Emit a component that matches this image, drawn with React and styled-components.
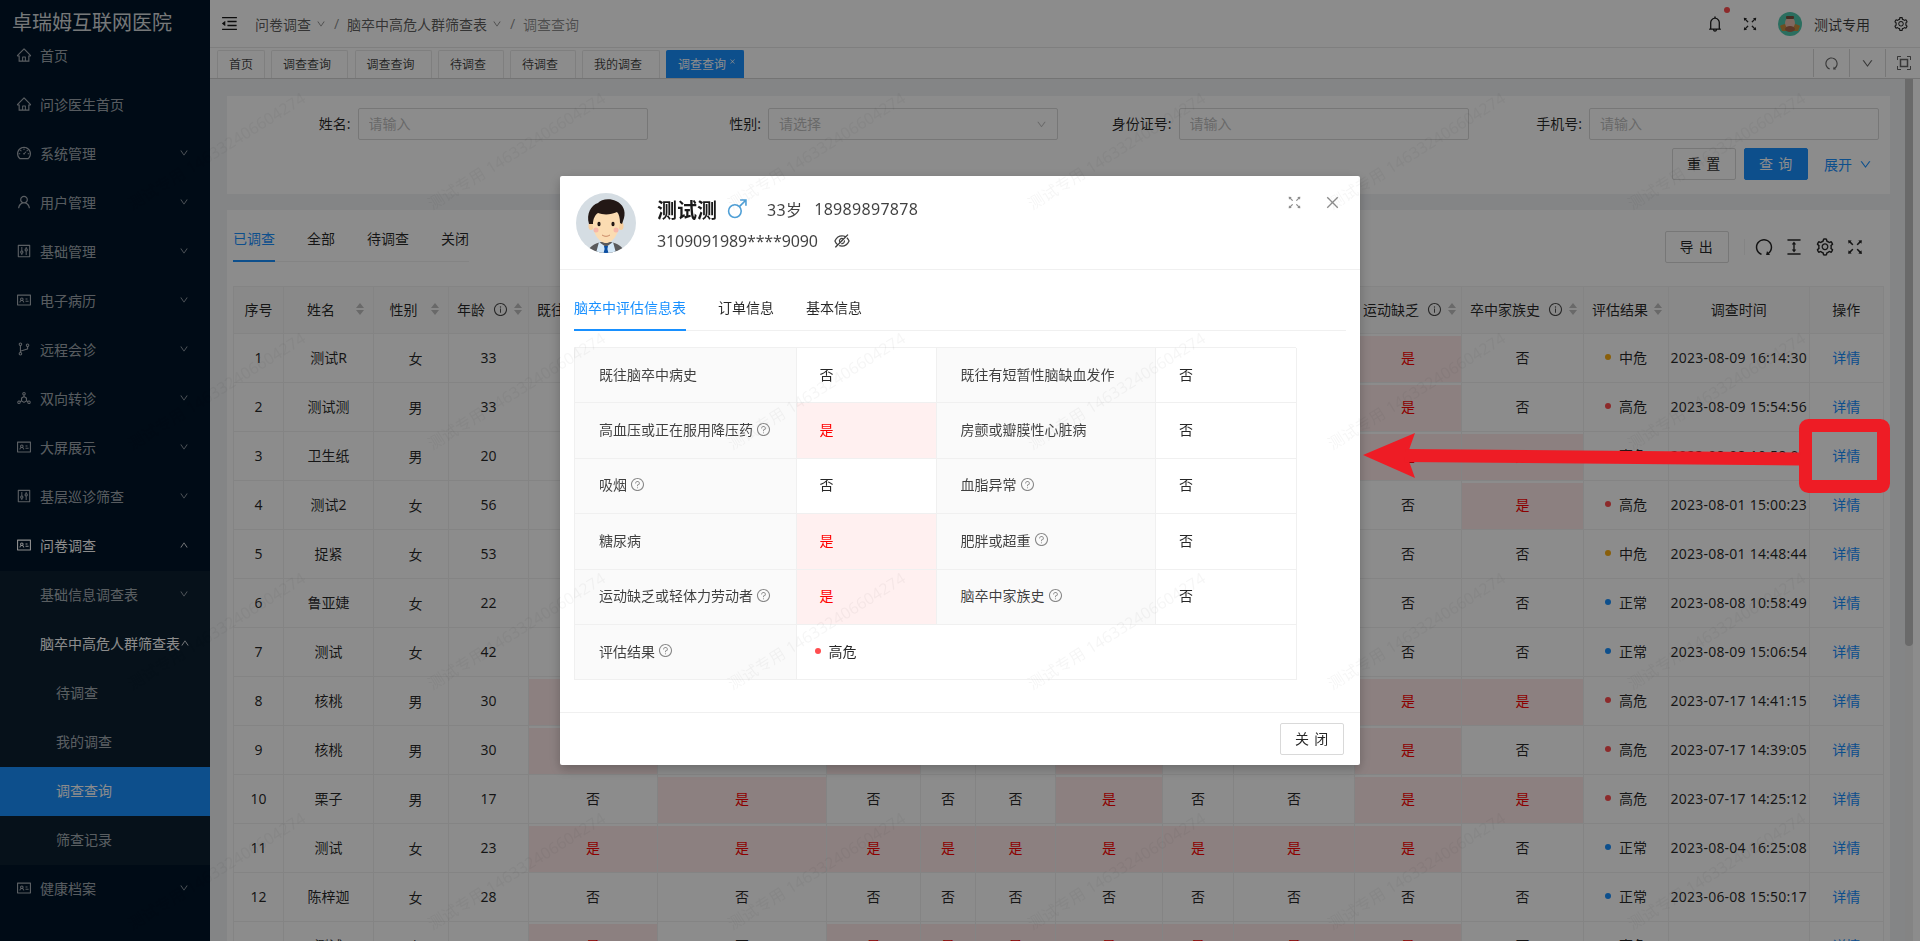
import React from 'react';
import styled, { createGlobalStyle } from 'styled-components';
import {
  AiOutlineHome, AiOutlineDashboard, AiOutlineUser, AiOutlineControl, AiOutlineIdcard,
  AiOutlineBranches, AiOutlineDeploymentUnit, AiOutlineDown, AiOutlineUp, AiOutlineMenuFold,
  AiOutlineBell, AiOutlineFullscreen, AiOutlineSetting, AiOutlineReload, AiOutlineColumnHeight,
  AiOutlineInfoCircle, AiOutlineQuestionCircle, AiOutlineEyeInvisible, AiOutlineClose,
} from 'react-icons/ai';

const FONT = `"Noto Sans", "Noto Sans CJK SC", "Liberation Sans", sans-serif`;

const Global = createGlobalStyle`
  html, body { margin: 0; padding: 0; height: 100%; overflow: hidden; background: #f0f2f5; }
  body { font-family: ${FONT}; font-size: 14px; color: rgba(0,0,0,.85); }
  * { box-sizing: border-box; }
  input::placeholder { color: #bfbfbf; }
`;

const Page = styled.div`display: flex; width: 1920px; height: 941px; overflow: hidden;`;

/* ---------- sidebar ---------- */
const Sider = styled.aside`width: 210px; flex: none; background: #001529; color: rgba(255,255,255,.65);`;
const Brand = styled.div`height: 32px; padding-left: 12px; font-size: 20px; line-height: 45px; white-space: nowrap; color: rgba(255,255,255,.85);`;
const MenuRow = styled.div`
  height: 49px; display: flex; align-items: center; padding: 0 21px 3px ${p => p.$indent}px;
  white-space: nowrap;
  color: ${p => (p.$bright ? '#fff' : 'rgba(255,255,255,.65)')};
  background: ${p => (p.$selected ? '#1890ff' : 'transparent')};
  svg.lead { font-size: 16px; margin-right: 8px; margin-left: -1px; flex: none; }
  svg.caret { font-size: 10px; margin-left: auto; flex: none; }
`;
const SubMenu = styled.div`background: #0b1f31;`;

/* ---------- main ---------- */
const Main = styled.main`flex: 1; min-width: 0; display: flex; flex-direction: column;`;
const TopBar = styled.header`height: 48px; flex: none; background: #fff; border-bottom: 1px solid #e8e8e8; display: flex; align-items: center; padding: 0 11px 0 10px;`;
const Crumbs = styled.nav`display: flex; align-items: center; color: rgba(0,0,0,.65); white-space: nowrap;
  svg.fold { font-size: 19px; margin-right: 16px; color: rgba(0,0,0,.9); }
  svg.caret { font-size: 10px; margin-left: 5px; color: rgba(0,0,0,.5); }
`;
const Slash = styled.span`width: 7px; margin: 0 7px; text-align: center; color: rgba(0,0,0,.45);`;
const CrumbNow = styled.span`color: rgba(0,0,0,.45);`;
const TopRight = styled.div`margin-left: auto; display: flex; align-items: center;`;
const Bell = styled.span`position: relative; display: flex; font-size: 18px; margin-right: 17px; color: rgba(0,0,0,.9);`;
const BellDot = styled.i`position: absolute; top: -8px; right: -6px; width: 6px; height: 6px; border-radius: 50%; background: #ff4d4f;`;
const TopIcon = styled.span`display: flex; font-size: ${p => p.$size || 16}px; margin-right: ${p => p.$mr || 0}px; color: rgba(0,0,0,.85);`;
const UserName = styled.span`margin: 0 23px 0 12px; color: rgba(0,0,0,.75); white-space: nowrap;`;

const TabBar = styled.div`height: 31px; flex: none; background: #fff; border-bottom: 1px solid #d4d4d4; display: flex; padding-left: 7px;`;
const PageTabs = styled.div`display: flex; gap: 6.5px; padding-top: 2px;`;
const PageTab = styled.div`
  width: ${p => p.$w}px; height: 27.5px; display: flex; align-items: center; padding-left: 11px;
  font-size: 12px; white-space: nowrap; border: 1px solid ${p => (p.$active ? '#1890ff' : '#e8e8e8')}; border-bottom-width: 0;
  background: ${p => (p.$active ? '#1890ff' : '#fff')}; color: ${p => (p.$active ? '#fff' : 'rgba(0,0,0,.75)')};
  border-radius: 2px 2px 0 0;
`;
const TabX = styled(AiOutlineClose)`font-size: 7px; margin-left: 3px; margin-top: -5px;`;
const TabTools = styled.div`margin-left: auto; display: flex; padding-top: 1px; height: 29px; margin-right: -1px;`;
const TabTool = styled.div`width: 36px; display: flex; align-items: center; justify-content: center; border-left: 1px solid #d9d9d9; font-size: ${p => p.$size || 15}px; color: rgba(0,0,0,.6);`;
const Refresh = styled(AiOutlineReload)`transform: rotate(90deg);`;
const FrameGlyph = styled.svg`width: 14px; height: 14px;`;

const Body = styled.div`flex: 1; min-height: 0; display: flex; overflow: hidden;`;
const Content = styled.div`flex: 1; min-width: 0; padding: 17px 15px 0 17px;`;
const Rail = styled.div`width: 15px; flex: none; padding-right: 7px; background: linear-gradient(to right, #f1f1f1 8px, #fff 8px);`;
const RailThumb = styled.div`width: 8px; height: 567px; background: #c1c1c1; border-radius: 0 0 4px 4px;`;

const Card = styled.section`background: #fff;`;
const SearchCard = styled(Card)`height: 98px; padding: 12px 11px 0 10px;`;
const FormGrid = styled.div`display: grid; grid-template-columns: repeat(4, 1fr);`;
const Field = styled.div`display: flex; align-items: center;`;
const FieldLabel = styled.label`width: 120.5px; flex: none; padding: 0 7px 2px 0; text-align: right; color: rgba(0,0,0,.85); white-space: nowrap;`;
const TextInput = styled.input`width: 290px; height: 32px; border: 1px solid #d9d9d9; border-radius: 2px; padding: 0 10px 2px; font: 14px ${FONT}; background: #fff; outline: none;`;
const SelectBox = styled.div`position: relative; display: flex; width: 290px;
  svg { position: absolute; right: 11px; top: 11px; font-size: 11px; color: #bfbfbf; }
`;
const Actions = styled.div`display: flex; align-items: center; justify-content: flex-end; margin: 8px 7px 0 0; gap: 8px;`;
const Btn = styled.button`
  width: 64px; height: 32px; padding: 0 0 2px; font: 14px ${FONT}; letter-spacing: .8px; border-radius: 2px; cursor: pointer; flex: none;
  border: 1px solid ${p => (p.$primary ? '#1890ff' : '#d9d9d9')};
  background: ${p => (p.$primary ? '#1890ff' : '#fff')}; color: ${p => (p.$primary ? '#fff' : 'rgba(0,0,0,.85)')};
`;
const More = styled.span`display: flex; align-items: center; color: #1890ff; margin-left: 8px; gap: 7px; svg { font-size: 13px; }`;

const TableCard = styled(Card)`margin-top: 16px; padding: 0 7px 0 6px; height: 800px;`;
const TableHead = styled.div`height: 52px; display: flex; justify-content: space-between; align-items: flex-end;`;
const LineTabs = styled.div`display: flex; gap: 32px; border-bottom: 1px solid #f0f0f0; margin: ${p => p.$margin || 0};`;
const LineTab = styled.div`height: 44px; line-height: 44px; white-space: nowrap; position: relative; color: ${p => (p.$active ? '#1890ff' : 'rgba(0,0,0,.85)')};
  &::after { content: ''; display: ${p => (p.$active ? 'block' : 'none')}; position: absolute; left: 0; right: 0; bottom: -1px; height: 2px; background: #1890ff; }
`;
const Toolbar = styled.div`display: flex; align-items: center; margin: 0 18px -1px 0; font-size: 20px; gap: 10.5px; color: rgba(0,0,0,.85); svg { display: block; }`;
const ToolSep = styled.i`width: 1px; height: 16px; background: #f0f0f0; margin: 0 -1.5px 0 4.5px;`;

const Grid = styled.table`width: 1650px; margin-top: 24px; border-collapse: collapse; table-layout: fixed; border: 1px solid #f0f0f0;`;
const Th = styled.th`height: 47px; padding: 0 8px 2px; background: #fafafa; border: 1px solid #f0f0f0; font-weight: 400; white-space: nowrap; overflow: hidden;`;
const ThInner = styled.div`display: flex; align-items: center; justify-content: ${p => (p.$center ? 'center' : 'flex-start')};`;
const ThTitle = styled.span`flex: ${p => (p.$grow ? 1 : 'none')}; text-align: ${p => (p.$grow ? 'center' : 'left')};`;
const InfoMark = styled(AiOutlineInfoCircle)`margin-left: 8px; font-size: 15px; flex: none; color: rgba(0,0,0,.7);`;
const Sorter = styled.svg`width: 10px; height: 14px; margin-left: 5px; flex: none;`;
const Td = styled.td`
  height: 49px; padding: 0 0 2px; text-align: center; border: 1px solid #f0f0f0; white-space: nowrap; overflow: hidden;
  ${p => p.$hit && 'background: #ffeaea; box-shadow: inset 0 2px 0 #fff; color: #f00;'}
`;
const SexText = styled.span`display: inline-block; transform: translate(4.5px, 1px);`;
const TimeText = styled.span`letter-spacing: .22px;`;
const ResultCell = styled.div`display: flex; align-items: center; padding-left: 21px; gap: 8px;`;
const Dot = styled.i`width: 6px; height: 6px; border-radius: 50%; background: ${p => p.$c}; flex: none;`;
const Link = styled.a`color: #1890ff;`;

/* ---------- overlay layers ---------- */
const Mask = styled.div`position: fixed; inset: 0; background: rgba(0,0,0,.45);`;
const ModalWrap = styled.div`position: fixed; inset: 0; display: flex; align-items: center; justify-content: center;`;
const Modal = styled.div`width: 800px; height: 589px; background: #fff; border-radius: 2px; box-shadow: 0 4px 12px rgba(0,0,0,.25); display: flex; flex-direction: column;`;
const ModalTop = styled.div`height: 94px; flex: none; border-bottom: 1px solid #f0f0f0; display: flex; padding: 17px 19px 0 16px;`;
const Face = styled.svg`width: 60px; height: 60px; flex: none;`;
const Who = styled.div`margin-left: 21px; display: flex; flex-direction: column;`;
const WhoLine = styled.div`display: flex; align-items: center; height: 32px; color: rgba(0,0,0,.75); font-size: 16px; white-space: nowrap;`;
const WhoName = styled.strong`font-size: 20px; font-weight: 700; color: rgba(0,0,0,.9);`;
const Male = styled.svg`width: 20px; height: 20px; margin: 0 20px 0 10px;`;
const Age = styled.span`letter-spacing: .3px;`;
const Phone = styled.span`margin-left: 12px; letter-spacing: .3px;`;
const IdNo = styled.span`letter-spacing: -.15px;`;
const Eye = styled(AiOutlineEyeInvisible)`margin-left: 15px; font-size: 18px; color: rgba(0,0,0,.75);`;
const ModalTools = styled.div`margin-left: auto; display: flex; align-items: center; height: 18px; gap: 21px; color: rgba(0,0,0,.45); font-size: 17px;`;
const Desc = styled.div`
  display: grid; grid-template-columns: 221.5px 140px 219.5px 140.5px; grid-auto-rows: 55.4px;
  width: 722px; margin: 16px 0 0 14px; border: 1px solid #f0f0f0; border-width: 1px 0 0 1px;
`;
const DescCell = styled.div`
  display: flex; align-items: center; padding: 0 0 3px ${p => (p.$label ? 24 : 23)}px; border: 1px solid #f0f0f0; border-width: 0 1px 1px 0; white-space: nowrap;
  grid-column: ${p => (p.$span ? `span ${p.$span}` : 'auto')};
  background: ${p => (p.$label ? '#fafafa' : p.$hit ? '#fff0f0' : 'transparent')};
  color: ${p => (p.$hit ? '#f00' : p.$label ? 'rgba(0,0,0,.75)' : 'rgba(0,0,0,.85)')};
`;
const Help = styled(AiOutlineQuestionCircle)`font-size: 15px; margin-left: 3px; color: rgba(0,0,0,.45);`;
const RiskDot = styled.i`width: 6px; height: 6px; border-radius: 50%; background: #ff4d4f; margin: 0 8px 0 -5px;`;
const ModalFoot = styled.div`margin-top: auto; height: 53px; border-top: 1px solid #f0f0f0; display: flex; align-items: center; justify-content: flex-end; padding-right: 16px;`;

const Marks = styled.div`
  position: fixed; left: 0; top: -142px; width: 2100px; height: 1200px; pointer-events: none;
  display: grid; grid-template-columns: repeat(7, 300px); grid-auto-rows: 240px;
`;
const MarkCell = styled.div`position: relative;`;
const MarkText = styled.span`
  position: absolute; left: 216px; top: 52px; transform: translate(-50%, -50%) rotate(-32deg);
  font-size: 16px; white-space: nowrap; color: rgba(0,0,0,.04);
`;
const Callout = styled.svg`position: fixed; left: 0; top: 0; width: 1920px; height: 941px; pointer-events: none;`;

/* ---------- drawings ---------- */
const SortIcon = () => (
  <Sorter viewBox="0 0 10 14"><path d="M5 1l4 5H1zM5 13L1 8h8z" fill="#bfbfbf" /></Sorter>
);
const FrameIcon = () => (
  <FrameGlyph viewBox="0 0 14 14" fill="none" stroke="currentColor">
    <path d="M.5 4V.5H4M10 .5h3.500V4M13.500 10v3.500H10M4 13.500H.5V10" />
    <rect x="3.500" y="3.500" width="7" height="7" strokeWidth="1.500" />
  </FrameGlyph>
);
const Doctor = () => (
  <Face viewBox="0 0 60 60">
    <defs><clipPath id="fc"><circle cx="30" cy="30" r="30" /></clipPath></defs>
    <g clipPath="url(#fc)">
      <rect width="60" height="60" fill="#d5dde3" />
      <path d="M12 60c1-7 6-9 13-11h10c7 2 12 4 13 11z" fill="#5a5a5c" />
      <path d="M23 49l7 5 7-5 3 11H20z" fill="#d5e8f7" />
      <path d="M28 53h4l-.6 3 1 4h-4.800l1-4z" fill="#0b4ea2" />
      <ellipse cx="15" cy="33" rx="2.500" ry="4" fill="#f7cf9f" />
      <ellipse cx="45" cy="33" rx="2.500" ry="4" fill="#f7cf9f" />
      <path d="M16 26c0-7 7-11 14-11s14 4 14 11c0 14-7 24-14 24s-14-10-14-24z" fill="#fbdcb2" />
      <path d="M13 31c-3-10 2-19 9-21 3-4 12-5 18-2 7 3 10 10 8 17l-2 6-2-1c0-5-1-9-3-11-6 3-14 3-19 1-3 2-5 6-5 11z" fill="#231815" />
      <ellipse cx="23" cy="31" rx="1.600" ry="2.200" fill="#231815" />
      <ellipse cx="37" cy="31" rx="1.600" ry="2.200" fill="#231815" />
      <circle cx="20" cy="37" r="2.500" fill="#f7b7a9" />
      <circle cx="40" cy="37" r="2.500" fill="#f7b7a9" />
      <path d="M26 42c2.500 1.800 5.500 1.800 8 0" stroke="#c98a67" fill="none" strokeWidth="1" />
    </g>
  </Face>
);
const UserAvatar = styled.svg`width: 24px; height: 24px; flex: none;`;
const Pet = () => (
  <UserAvatar viewBox="0 0 24 24">
    <circle cx="12" cy="12" r="12" fill="#4fc9ae" />
    <path d="M2 14c3-3 17-3 20 0l-2 5H4z" fill="#c98f3d" />
    <ellipse cx="12" cy="11" rx="5" ry="5.500" fill="#e9c0b0" />
    <ellipse cx="12" cy="17" rx="5" ry="3" fill="#a8664a" />
    <rect x="8" y="4" width="8" height="3" rx="1" fill="#7b5540" />
  </UserAvatar>
);

const NAV = [
  ['首页', AiOutlineHome, false], ['问诊医生首页', AiOutlineHome, false], ['系统管理', AiOutlineDashboard, true],
  ['用户管理', AiOutlineUser, true], ['基础管理', AiOutlineControl, true], ['电子病历', AiOutlineIdcard, true],
  ['远程会诊', AiOutlineBranches, true], ['双向转诊', AiOutlineDeploymentUnit, true], ['大屏展示', AiOutlineIdcard, true],
  ['基层巡诊筛查', AiOutlineControl, true],
];
const PAGE_TABS = [['首页', 47.5], ['调查查询', 77], ['调查查询', 77], ['待调查', 65.5], ['待调查', 65.5], ['我的调查', 77.5]];
const COLS = [50, 90, 75, 80, 129, 169, 94, 55, 80, 107, 71, 121, 107, 122, 85, 140.5, 74.5];
const RISK = { 高危: '#ff4d4f', 中危: '#faad14', 正常: '#1890ff' };
const ROWS = [
  ['测试R', '女', 33, '0000100010', '中危', '2023-08-09 16:14:30'],
  ['测试测', '男', 33, '0010001010', '高危', '2023-08-09 15:54:56'],
  ['卫生纸', '男', 20, '0100010011', '高危', '2023-08-08 10:58:00'],
  ['测试2', '女', 56, '0010000001', '高危', '2023-08-01 15:00:23'],
  ['捉紧', '女', 53, '0000100000', '中危', '2023-08-01 14:48:44'],
  ['鲁亚婕', '女', 22, '0000000000', '正常', '2023-08-08 10:58:49'],
  ['测试', '女', 42, '0000000000', '正常', '2023-08-09 15:06:54'],
  ['核桃', '男', 30, '1000000011', '高危', '2023-07-17 14:41:15'],
  ['核桃', '男', 30, '1010010010', '高危', '2023-07-17 14:39:05'],
  ['栗子', '男', 17, '0100010011', '高危', '2023-07-17 14:25:12'],
  ['测试', '女', 23, '1111111110', '正常', '2023-08-04 16:25:08'],
  ['陈梓迦', '女', 28, '0000000000', '正常', '2023-06-08 15:50:17'],
  ['测试', '女', 33, '1011111110', '高危', '2023-08-08 10:07:40'],
];
const HEADS = [
  ['既往脑卒中病史', 1], ['既往有短暂性脑缺血发作', 1], ['高血压或正在服用降压药', 1], ['房颤', 0], ['吸烟', 0],
  ['血脂异常', 1], ['糖尿病', 0], ['肥胖或超重', 1], ['运动缺乏', 1], ['卒中家族史', 1],
];
const DESC = [
  ['既往脑卒中病史', 0, 0, '既往有短暂性脑缺血发作', 0, 0],
  ['高血压或正在服用降压药', 1, 1, '房颤或瓣膜性心脏病', 0, 0],
  ['吸烟', 1, 0, '血脂异常', 1, 0],
  ['糖尿病', 0, 1, '肥胖或超重', 1, 0],
  ['运动缺乏或轻体力劳动者', 1, 1, '脑卒中家族史', 1, 0],
];

export default function App() {
  return (
    <>
      <Global />
      <Page>
        <Sider>
          <Brand>卓瑞姆互联网医院</Brand>
          {NAV.map(([t, I, c]) => (
            <MenuRow key={t} $indent={17}><I className="lead" />{t}{c && <AiOutlineDown className="caret" />}</MenuRow>
          ))}
          <MenuRow $indent={17} $bright><AiOutlineIdcard className="lead" />问卷调查<AiOutlineUp className="caret" /></MenuRow>
          <SubMenu>
            <MenuRow $indent={40}>基础信息调查表<AiOutlineDown className="caret" /></MenuRow>
            <MenuRow $indent={40} $bright>脑卒中高危人群筛查表<AiOutlineUp className="caret" /></MenuRow>
            <MenuRow $indent={56}>待调查</MenuRow>
            <MenuRow $indent={56}>我的调查</MenuRow>
            <MenuRow $indent={56} $selected $bright>调查查询</MenuRow>
            <MenuRow $indent={56}>筛查记录</MenuRow>
          </SubMenu>
          <MenuRow $indent={17}><AiOutlineIdcard className="lead" />健康档案<AiOutlineDown className="caret" /></MenuRow>
        </Sider>
        <Main>
          <TopBar>
            <Crumbs>
              <AiOutlineMenuFold className="fold" />
              问卷调查<AiOutlineDown className="caret" /><Slash>/</Slash>
              脑卒中高危人群筛查表<AiOutlineDown className="caret" /><Slash>/</Slash>
              <CrumbNow>调查查询</CrumbNow>
            </Crumbs>
            <TopRight>
              <Bell><AiOutlineBell /><BellDot /></Bell>
              <TopIcon $size={18} $mr={19}><AiOutlineFullscreen /></TopIcon>
              <Pet />
              <UserName>测试专用</UserName>
              <TopIcon><AiOutlineSetting /></TopIcon>
            </TopRight>
          </TopBar>
          <TabBar>
            <PageTabs>
              {PAGE_TABS.map(([t, w], i) => <PageTab key={i} $w={w}>{t}</PageTab>)}
              <PageTab $w={78} $active>调查查询<TabX /></PageTab>
            </PageTabs>
            <TabTools>
              <TabTool><Refresh /></TabTool>
              <TabTool $size={13}><AiOutlineDown /></TabTool>
              <TabTool><FrameIcon /></TabTool>
            </TabTools>
          </TabBar>
          <Body>
            <Content>
              <SearchCard>
                <FormGrid>
                  <Field><FieldLabel>姓名:</FieldLabel><TextInput placeholder="请输入" readOnly /></Field>
                  <Field><FieldLabel>性别:</FieldLabel><SelectBox><TextInput placeholder="请选择" readOnly /><AiOutlineDown /></SelectBox></Field>
                  <Field><FieldLabel>身份证号:</FieldLabel><TextInput placeholder="请输入" readOnly /></Field>
                  <Field><FieldLabel>手机号:</FieldLabel><TextInput placeholder="请输入" readOnly /></Field>
                </FormGrid>
                <Actions>
                  <Btn>重 置</Btn>
                  <Btn $primary>查 询</Btn>
                  <More>展开<AiOutlineDown /></More>
                </Actions>
              </SearchCard>
              <TableCard>
                <TableHead>
                  <LineTabs>
                    <LineTab $active>已调查</LineTab><LineTab>全部</LineTab><LineTab>待调查</LineTab><LineTab>关闭</LineTab>
                  </LineTabs>
                  <Toolbar>
                    <Btn>导 出</Btn>
                    <ToolSep />
                    <Refresh /><AiOutlineColumnHeight /><AiOutlineSetting /><AiOutlineFullscreen />
                  </Toolbar>
                </TableHead>
                <Grid>
                  <colgroup>{COLS.map((w, i) => <col key={i} style={{ width: w }} />)}</colgroup>
                  <thead>
                    <tr>
                      <Th><ThInner $center>序号</ThInner></Th>
                      <Th><ThInner><ThTitle $grow>姓名</ThTitle><SortIcon /></ThInner></Th>
                      <Th><ThInner><ThTitle $grow>性别</ThTitle><SortIcon /></ThInner></Th>
                      <Th><ThInner><ThTitle>年龄</ThTitle><InfoMark /><SortIcon /></ThInner></Th>
                      {HEADS.map(([t, hasInfo]) => (
                        <Th key={t}><ThInner><ThTitle>{t}</ThTitle>{hasInfo ? <InfoMark /> : null}<SortIcon /></ThInner></Th>
                      ))}
                      <Th><ThInner><ThTitle>评估结果</ThTitle><SortIcon /></ThInner></Th>
                      <Th><ThInner $center>调查时间</ThInner></Th>
                      <Th><ThInner $center>操作</ThInner></Th>
                    </tr>
                  </thead>
                  <tbody>
                    {ROWS.map((r, i) => (
                      <tr key={i}>
                        <Td>{i + 1}</Td>
                        <Td>{r[0]}</Td>
                        <Td><SexText>{r[1]}</SexText></Td>
                        <Td>{r[2]}</Td>
                        {r[3].split('').map((f, j) => (
                          <Td key={j} $hit={f === '1'}>{f === '1' ? '是' : '否'}</Td>
                        ))}
                        <Td><ResultCell><Dot $c={RISK[r[4]]} />{r[4]}</ResultCell></Td>
                        <Td><TimeText>{r[5]}</TimeText></Td>
                        <Td><Link>详情</Link></Td>
                      </tr>
                    ))}
                  </tbody>
                </Grid>
              </TableCard>
            </Content>
            <Rail><RailThumb /></Rail>
          </Body>
        </Main>
      </Page>
      <Mask />
      <ModalWrap>
        <Modal>
          <ModalTop>
            <Doctor />
            <Who>
              <WhoLine>
                <WhoName>测试测</WhoName>
                <Male viewBox="0 0 19 19" fill="none" stroke="#4f9fd6" strokeWidth="1.500">
                  <circle cx="7.500" cy="11.500" r="6" /><path d="M12 7l6-6M12.500 1H18v5.500" />
                </Male>
                <Age>33岁</Age><Phone>18989897878</Phone>
              </WhoLine>
              <WhoLine><IdNo>3109091989****9090</IdNo><Eye /></WhoLine>
            </Who>
            <ModalTools><AiOutlineFullscreen /><AiOutlineClose /></ModalTools>
          </ModalTop>
          <LineTabs $margin="16px 14px 0">
            <LineTab $active>脑卒中评估信息表</LineTab><LineTab>订单信息</LineTab><LineTab>基本信息</LineTab>
          </LineTabs>
          <Desc>
            {DESC.map((d) => (
              <React.Fragment key={d[0]}>
                <DescCell $label>{d[0]}{d[1] ? <Help /> : null}</DescCell>
                <DescCell $hit={!!d[2]}>{d[2] ? '是' : '否'}</DescCell>
                <DescCell $label>{d[3]}{d[4] ? <Help /> : null}</DescCell>
                <DescCell $hit={!!d[5]}>{d[5] ? '是' : '否'}</DescCell>
              </React.Fragment>
            ))}
            <DescCell $label>评估结果<Help /></DescCell>
            <DescCell $span={3}><RiskDot />高危</DescCell>
          </Desc>
          <ModalFoot><Btn>关 闭</Btn></ModalFoot>
        </Modal>
      </ModalWrap>
      <Marks>
        {Array.from({ length: 42 }, (_, i) => (
          <MarkCell key={i}><MarkText>测试专用 146332406604274</MarkText></MarkCell>
        ))}
      </Marks>
      <Callout viewBox="0 0 1920 941">
        <rect x="1805.500" y="425.500" width="78" height="61" rx="3" fill="none" stroke="#ee1c25" strokeWidth="13" />
        <path d="M1363 455L1415 433L1407 455.500L1415 478Z" fill="#ee1c25" />
        <path d="M1405 455.500L1800 459" stroke="#ee1c25" strokeWidth="13" fill="none" />
      </Callout>
    </>
  );
}
